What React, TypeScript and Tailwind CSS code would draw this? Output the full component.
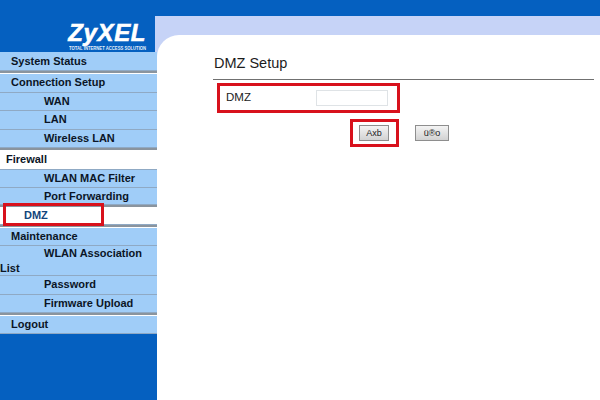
const font = "font-['Liberation_Sans',Arial,sans-serif]";

type Row = { label: string; kind: "top" | "sub" | "active-top" | "active-sub"; h: number; pad?: number; sep?: boolean };

const rows: Row[] = [
  { label: "System Status", kind: "top", h: 19, pad: 2, sep: true },
  { label: "Connection Setup", kind: "top", h: 19 },
  { label: "WAN", kind: "sub", h: 18 },
  { label: "LAN", kind: "sub", h: 19 },
  { label: "Wireless LAN", kind: "sub", h: 18, sep: true },
  { label: "Firewall", kind: "active-top", h: 19 },
  { label: "WLAN MAC Filter", kind: "sub", h: 18 },
  { label: "Port Forwarding", kind: "sub", h: 17, sep: true },
  { label: "DMZ", kind: "active-sub", h: 17, pad: 0, sep: true },
  { label: "Maintenance", kind: "top", h: 18 },
  { label: "WLAN Association List", kind: "sub", h: 30, pad: 0 },
  { label: "Password", kind: "sub", h: 19 },
  { label: "Firmware Upload", kind: "sub", h: 18, sep: true },
  { label: "Logout", kind: "top", h: 18 },
];

function MenuRow({ row }: { row: Row }) {
  const active = row.kind.startsWith("active");
  const sub = row.kind === "sub";
  return (
    <div>
      <div
        className={`text-[11px] leading-[15px] font-bold border-b border-[#8fa9c4] ${active ? "bg-white" : "bg-[#a0cdf8]"} ${row.kind === "active-sub" ? "text-[#12457c]" : "text-[#0b1526]"}`}
        style={{ height: row.h, paddingTop: row.pad ?? 1 }}
      >
        {sub ? (
          <div className="indent-[44px]">{row.label}</div>
        ) : (
          <div className={row.kind === "active-sub" ? "pl-[24px]" : row.kind === "active-top" ? "pl-[6px]" : "pl-[11px]"}>
            {row.label}
          </div>
        )}
      </div>
      {row.sep && <div className="h-[3px] border-t-2 border-[#8a949e] bg-white" />}
    </div>
  );
}

export default function App() {
  return (
    <div className={`relative flex h-[400px] w-[600px] overflow-hidden bg-[#0560c0] ${font}`}>
      {/* Sidebar */}
      <aside className="w-[157px] shrink-0">
        <div className="flex h-[52px] flex-col items-end pr-[11px] pt-[22px] text-white">
          <div className="text-[24px] font-bold italic leading-[22px] tracking-[0.6px] [-webkit-text-stroke:0.6px_white]">ZyXEL</div>
          <div className="mt-[1px] origin-right scale-x-[0.7] text-[6px] font-bold leading-[7px] whitespace-nowrap text-[#e4eefa]">TOTAL INTERNET ACCESS SOLUTION</div>
        </div>
        <nav>
          {rows.map((r) => (
            <MenuRow key={r.label} row={r} />
          ))}
        </nav>
      </aside>

      {/* Main */}
      <main className="mt-[16px] flex-1 bg-[#c6d3f7] pt-[19px]">
        <div className="h-full rounded-tl-[22px] bg-white pl-[56px] pr-[6px] pt-[19px]">
          <h1 className="pl-px text-[14.5px] leading-[18px] text-[#1c1c1c]">DMZ Setup</h1>
          <div className="mt-[7px] h-px bg-[#707070]" />
          <div className="mt-[10px] flex h-[16px] items-center pl-[13px]">
            <span className="w-[90px] text-[11.5px] text-[#222]">DMZ</span>
            <input className="h-[16px] w-[72px] border border-[#dfe3e6] bg-white" />
          </div>
          <div className="mt-[19px] flex pl-[146px]">
            <button className="h-[16px] w-[30px] border border-[#8e8e8e] bg-linear-to-b from-[#f4f4f4] to-[#d2d2d2] text-[9px] leading-[14px] text-[#222]">Axb</button>
            <button className="ml-[26px] h-[16px] w-[34px] border border-[#8e8e8e] bg-linear-to-b from-[#f4f4f4] to-[#d2d2d2] text-[9px] leading-[14px] text-[#222]">ü®o</button>
          </div>
        </div>
      </main>

      {/* Strip corner that runs over the sidebar edge */}
      <div className="absolute left-[155px] top-[16px] h-[36px] w-[2px] bg-[#c6d3f7]" />

      {/* Red annotation boxes */}
      <div className="absolute left-[3px] top-[203px] z-20 h-[23px] w-[101px] border-[3px] border-[#d8111c]" />
      <div className="absolute left-[217px] top-[83px] z-20 h-[30px] w-[183px] border-[3px] border-[#d8111c]" />
      <div className="absolute left-[350px] top-[119px] z-20 h-[28px] w-[49px] border-[3px] border-[#d8111c]" />
    </div>
  );
}
